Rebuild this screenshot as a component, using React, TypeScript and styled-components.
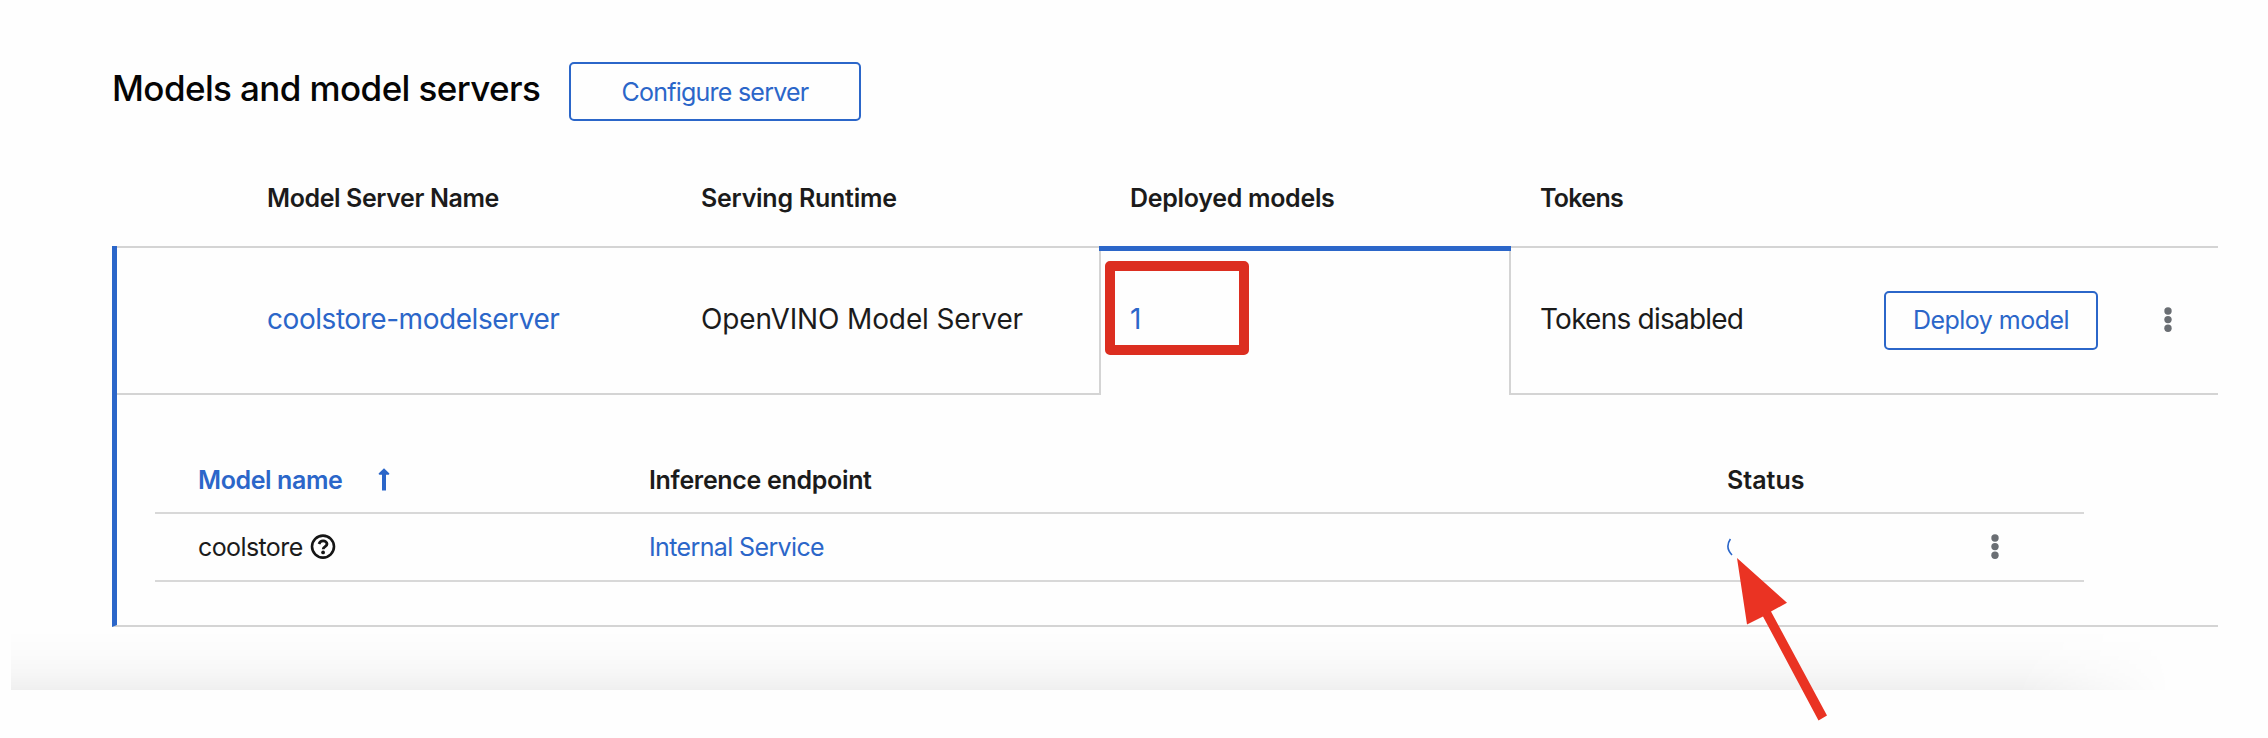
import React from 'react';
import styled, { createGlobalStyle } from 'styled-components';

const BLUE = '#2b66c9';
const LINE = '#d4d4d4';

const GlobalStyle = createGlobalStyle`
  * { box-sizing: border-box; }
  body { margin: 0; background: #fff; overflow: hidden; }
`;

const Page = styled.main`
  position: relative;
  width: 2268px;
  height: 738px;
  padding: 62px 50px 0 112px;
  background: #fefefe;
  color: #1b1b1b;
  font-family: Inter, 'Liberation Sans', sans-serif;
`;

const Label = styled.span<{ $size: number; $track?: number; $weight?: number; $link?: boolean }>`
  display: block;
  white-space: nowrap;
  line-height: 36px;
  font-size: ${p => p.$size}px;
  font-weight: ${p => p.$weight ?? 400};
  letter-spacing: ${p => p.$track ?? 0}px;
  color: ${p => (p.$link ? BLUE : 'inherit')};
`;

const Header = styled.header`
  display: flex;
  height: 60px;
`;

const Title = styled.h2`
  width: 457px;
  margin: 0;
  padding-top: 4px;
  font-size: 35px;
  font-weight: 500;
  line-height: 44px;
  letter-spacing: -0.6px;
  white-space: nowrap;
  color: #050505;
`;

const OutlineButton = styled.button<{ $width: number; $shift?: number }>`
  display: flex;
  align-items: center;
  justify-content: center;
  width: ${p => p.$width}px;
  height: 59px;
  padding: ${p => p.$shift ?? 0}px 0 0;
  border: 2px solid ${BLUE};
  border-radius: 5px;
  background: transparent;
  font-family: inherit;
`;

const HeadRow = styled.div`
  display: grid;
  grid-template-columns: 155px 434px 429px 410px auto;
  height: 124px;
  padding-top: 58px;
`;

const Expanded = styled.section`
  height: 381px;
  border-left: 5px solid ${BLUE};
  border-bottom: 2px solid ${LINE};
`;

const ServerRow = styled.div`
  display: grid;
  grid-template-columns: 982px 412px 1fr;
  height: 149px;
`;

const Group = styled.div<{ $indent: number }>`
  display: flex;
  align-items: center;
  border-top: 2px solid ${LINE};
  border-bottom: 2px solid ${LINE};
  padding: 0 0 1px ${p => p.$indent}px;
`;

const Cell = styled.div<{ $width?: number }>`
  width: ${p => (p.$width ? `${p.$width}px` : 'auto')};
  flex: none;
  padding-bottom: 2px;
`;

const ActionCell = styled.div`
  width: 279px;
  flex: none;
`;

const ActiveCell = styled.div`
  position: relative;
  display: flex;
  align-items: center;
  padding: 0 0 1px 29px;
  border: solid ${LINE};
  border-width: 0 2px;

  &::before {
    content: '';
    position: absolute;
    top: 0;
    left: -2px;
    right: -2px;
    height: 5px;
    background: ${BLUE};
  }
`;

const Highlight = styled.div`
  position: absolute;
  left: 4px;
  top: 15px;
  width: 144px;
  height: 94px;
  border: 10px solid #dc2e20;
  border-radius: 5px;
`;

const Nested = styled.div`
  width: 1929px;
  margin: 57px 0 0 38px;
`;

const NestedRow = styled.div<{ $height: number; $lift?: number }>`
  display: grid;
  grid-template-columns: 451px 1078px 263px auto;
  align-items: center;
  height: ${p => p.$height}px;
  padding: 0 0 ${p => p.$lift ?? 0}px 43px;
  border-bottom: 2px solid #d8d8d8;
`;

const Inline = styled.div<{ $gap: number }>`
  display: flex;
  align-items: center;
  gap: ${p => p.$gap}px;
`;

const Shade = styled.div`
  position: absolute;
  left: 11px;
  top: 630px;
  width: 2170px;
  height: 60px;
  background: linear-gradient(to bottom, rgba(0, 0, 0, 0), rgba(0, 0, 0, 0.012) 40%, rgba(0, 0, 0, 0.032) 75%, rgba(0, 0, 0, 0.06));
  mask-image: linear-gradient(100deg, #000 92.5%, transparent 99.5%);
`;

const Pointer = styled.svg`
  position: absolute;
  left: 1730px;
  top: 550px;
`;

const Kebab = () => (
  <svg width="10" height="28" viewBox="0 0 10 28" fill="#6a6e73">
    <circle cx="5" cy="5" r="3.7" />
    <circle cx="5" cy="13.6" r="3.7" />
    <circle cx="5" cy="22.2" r="3.7" />
  </svg>
);

const SortUp = () => (
  <svg width="12" height="24" viewBox="0 0 12 24" fill={BLUE}>
    <path d="M6 0.3 L11.4 5.6 Q11.2 6.8 10.4 6.8 H8 V22.5 H4 V6.8 H1.6 Q0.8 6.8 0.6 5.6 Z" />
  </svg>
);

const Help = () => (
  <svg width="26" height="26" viewBox="0 0 26 26" fill="none" stroke="#151515">
    <circle cx="13" cy="12.6" r="11" strokeWidth="2.6" />
    <path d="M9 10 C9.8 7.8 11.2 6.9 13.1 6.9 C15.2 6.9 17 8.2 17 10.1 C17 12.6 13.2 12.6 13.2 15.2" strokeWidth="2.8" />
    <circle cx="13.1" cy="18.4" r="1.9" fill="#151515" stroke="none" />
  </svg>
);

const Spinner = () => (
  <svg width="24" height="24" viewBox="0 0 24 24" fill="none" stroke={BLUE} strokeWidth="1.6">
    <path d="M3.4 4 C0 9 0.2 15 5 20" />
  </svg>
);

export default function App() {
  return (
    <Page>
      <GlobalStyle />
      <Shade />
      <Header>
        <Title>Models and model servers</Title>
        <OutlineButton $width={292} $shift={1}>
          <Label $size={25} $track={-0.77} $link>Configure server</Label>
        </OutlineButton>
      </Header>
      <HeadRow>
        <span />
        <Label $size={25} $weight={600} $track={-0.4}>Model Server Name</Label>
        <Label $size={25} $weight={600} $track={-0.24}>Serving Runtime</Label>
        <Label $size={25} $weight={600} $track={-0.3}>Deployed models</Label>
        <Label $size={25} $weight={600} $track={-0.7}>Tokens</Label>
      </HeadRow>
      <Expanded>
        <ServerRow>
          <Group $indent={150}>
            <Cell $width={434}><Label $size={28} $track={-0.45} $link>coolstore-modelserver</Label></Cell>
            <Cell><Label $size={28} $track={-0.13}>OpenVINO Model Server</Label></Cell>
          </Group>
          <ActiveCell>
            <Highlight />
            <Cell><Label $size={28} $link>1</Label></Cell>
          </ActiveCell>
          <Group $indent={29}>
            <Cell $width={344}><Label $size={28} $track={-0.77}>Tokens disabled</Label></Cell>
            <ActionCell>
              <OutlineButton $width={214}><Label $size={25} $track={-0.52} $link>Deploy model</Label></OutlineButton>
            </ActionCell>
            <Kebab />
          </Group>
        </ServerRow>
        <Nested>
          <NestedRow $height={62} $lift={5}>
            <Inline $gap={36}>
              <Label $size={25} $weight={600} $track={-0.4} $link>Model name</Label>
              <SortUp />
            </Inline>
            <Label $size={25} $weight={600} $track={-0.32}>Inference endpoint</Label>
            <Label $size={25} $weight={600}>Status</Label>
          </NestedRow>
          <NestedRow $height={68}>
            <Inline $gap={7}>
              <Label $size={25} $track={-0.6}>coolstore</Label>
              <Help />
            </Inline>
            <Label $size={25} $track={-0.63} $link>Internal Service</Label>
            <Spinner />
            <Kebab />
          </NestedRow>
        </Nested>
      </Expanded>
      <Pointer width="110" height="175" viewBox="0 0 110 175" fill="#ea3323">
        <path d="M7 8 L57 52.7 L41 61.5 L97 165.5 L88.5 170.5 L33 66.5 L17 74.5 Z" />
      </Pointer>
    </Page>
  );
}
